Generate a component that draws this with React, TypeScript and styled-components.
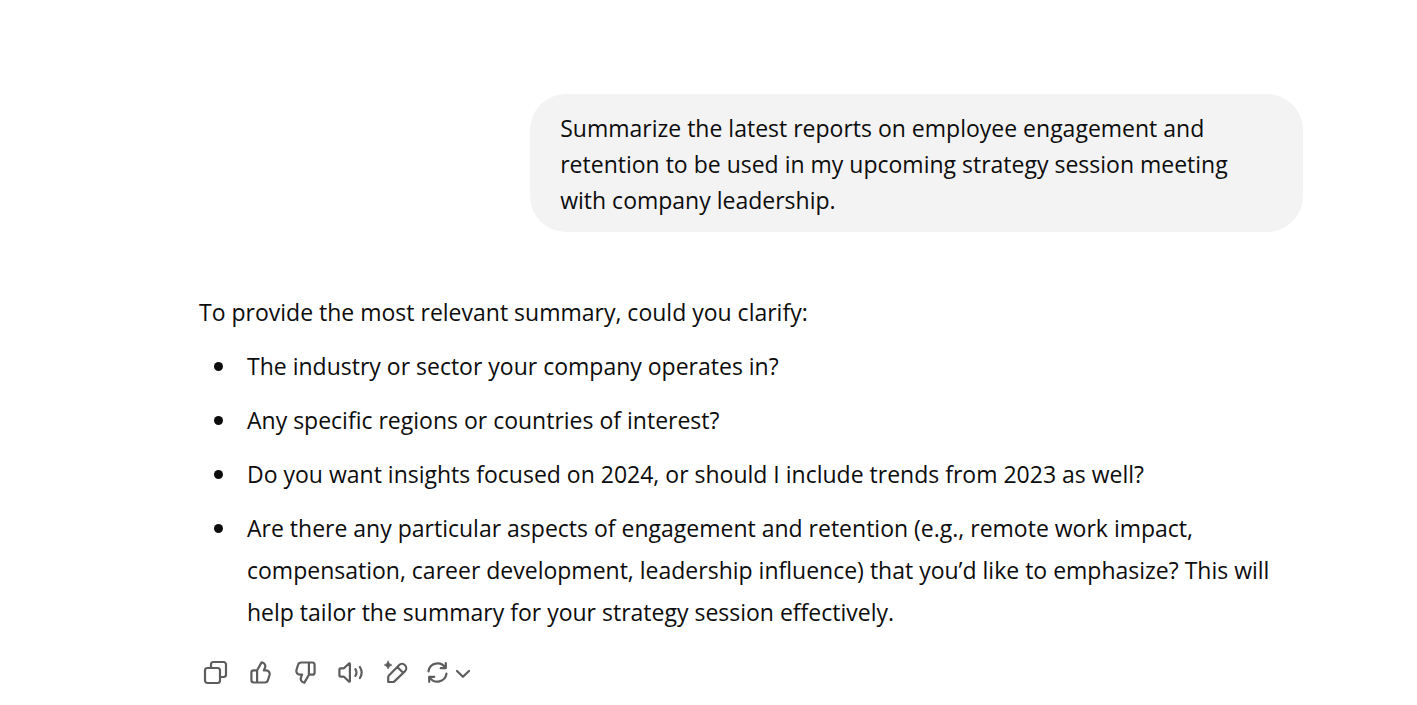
import React from "react";
import styled, { createGlobalStyle } from "styled-components";

const GlobalStyle = createGlobalStyle`
  * { box-sizing: border-box; }
  body {
    margin: 0;
    background: #fff;
    color: #0d0d0d;
    font-family: "Segoe UI", "Open Sans", "Noto Sans", sans-serif;
    font-size: 23px;
  }
`;

const Page = styled.main`
  padding: 94px 0 0 85px;
`;

const Thread = styled.div`
  max-width: 1104px;
  margin: 0 auto;
`;

const UserTurn = styled.article`
  display: flex;
  justify-content: flex-end;
`;

const Bubble = styled.p`
  width: 70%;
  margin: 0;
  padding: 16px 30px 14px;
  border-radius: 36px;
  background: #f3f3f3;
  line-height: 36px;
`;

const AssistantTurn = styled.article`
  margin-top: 59px;
  line-height: 42px;
`;

const Intro = styled.p`
  margin: 0;
`;

const Questions = styled.ul`
  display: flex;
  flex-direction: column;
  gap: 12px;
  margin: 12px 0 0;
  padding: 0;
  list-style: none;
`;

const Question = styled.li`
  display: flex;

  &::before {
    content: "";
    flex: none;
    width: 9px;
    height: 9px;
    margin: 17px 24px 0 15px;
    border-radius: 50%;
    background: #0d0d0d;
  }
`;

const Actions = styled.div`
  display: flex;
  margin: 17px 0 0 -6px;
`;

const ActionButton = styled.button<{ $wide?: boolean }>`
  display: flex;
  align-items: center;
  height: 45px;
  padding: 0 ${({ $wide }) => ($wide ? "6px" : "9px")};
  border: 0;
  border-radius: 12px;
  background: transparent;
  color: #5d5d5d;
  cursor: pointer;

  &:hover { background: #f3f3f3; }
`;

const Icon = styled.svg`
  display: block;
  flex: none;
  fill: none;
  stroke: currentColor;
  stroke-width: 2.2;
  stroke-linecap: round;
  stroke-linejoin: round;
`;

const CopyIcon = () => (
  <Icon width="27" height="27" viewBox="0 0 27 27" aria-hidden="true">
    <rect x="3" y="9" width="15" height="15" rx="2.4" />
    <path d="M9 9V5.4A2.4 2.4 0 0 1 11.4 3h10.2A2.4 2.4 0 0 1 24 5.4v10.2a2.4 2.4 0 0 1-2.4 2.4H18" />
  </Icon>
);

const ThumbShape = () => (
  <path d="M10.1 12.1V23.4M10.1 11.2 14.6 3.4 15.3 3.5A3.9 3.9 0 0 1 18.2 8.2L16.9 11.4H19.2A3.6 3.6 0 0 1 22.6 15.8L21 21A3.4 3.4 0 0 1 17.7 23.5H6.8A2.4 2.4 0 0 1 4.4 21.1V13.6A2.3 2.3 0 0 1 6.7 11.3H9.3Q9.9 11.3 10.1 11.2" />
);

const ThumbUpIcon = () => (
  <Icon width="27" height="27" viewBox="0 0 27 27" aria-hidden="true">
    <ThumbShape />
  </Icon>
);

const ThumbDownIcon = () => (
  <Icon width="27" height="27" viewBox="0 0 27 27" aria-hidden="true">
    <g transform="rotate(180 13.5 13.5)">
      <ThumbShape />
    </g>
  </Icon>
);

const SpeakerIcon = () => (
  <Icon width="27" height="27" viewBox="0 0 27 27" aria-hidden="true">
    <path d="M3.6 9.4H6.1Q6.9 9.4 7.5 8.8L11.7 4.7Q12.9 3.8 12.9 5.2V21.8Q12.9 23.2 11.7 22.3L7.5 18.2Q6.9 17.6 6.1 17.6H3.6Q2.4 17.6 2.4 16.4V10.6Q2.4 9.4 3.6 9.4Z" />
    <path d="M18.4 10.1A6.4 6.4 0 0 1 18.4 16.9M22.9 8A10.3 10.3 0 0 1 22.9 19" />
  </Icon>
);

const EditIcon = () => (
  <Icon width="27" height="27" viewBox="0 0 27 27" aria-hidden="true">
    <path d="M17 6.2A4.2 4.2 0 0 1 23 12.2L12.4 22.4Q11.8 23 10.9 23H6.2V18.2Q6.2 17.2 6.9 16.5ZM15.3 8 21.1 13.8" />
    <path
      d="M6.1 2.1Q6.8 5.2 10 6Q6.8 6.8 6.1 10Q5.3 6.8 2.2 6Q5.3 5.2 6.1 2.1Z"
      fill="currentColor"
      strokeWidth="0.6"
    />
  </Icon>
);

const RegenerateIcon = () => (
  <Icon width="27" height="27" viewBox="0 0 27 27" aria-hidden="true">
    <path d="M4.5 12.3A9.1 9.1 0 0 1 21.3 8.8M21.8 4.2V9.2H16.7" />
    <path d="M22.5 14.7A9.1 9.1 0 0 1 5.7 18.2M5.2 22.8V17.8H10.3" />
  </Icon>
);

const ChevronIcon = () => (
  <Icon width="24" height="27" viewBox="0 0 24 27" aria-hidden="true">
    <path d="M6 12 12 17.8 18 12" />
  </Icon>
);

const questions = [
  "The industry or sector your company operates in?",
  "Any specific regions or countries of interest?",
  "Do you want insights focused on 2024, or should I include trends from 2023 as well?",
  "Are there any particular aspects of engagement and retention (e.g., remote work impact, compensation, career development, leadership influence) that you’d like to emphasize? This will help tailor the summary for your strategy session effectively.",
];

export default function App() {
  return (
    <>
      <GlobalStyle />
      <Page>
        <Thread>
          <UserTurn>
            <Bubble>
              Summarize the latest reports on employee engagement and retention to be used in my
              upcoming strategy session meeting with company leadership.
            </Bubble>
          </UserTurn>
          <AssistantTurn>
            <Intro>To provide the most relevant summary, could you clarify:</Intro>
            <Questions>
              {questions.map((question) => (
                <Question key={question}>{question}</Question>
              ))}
            </Questions>
            <Actions>
              <ActionButton type="button" aria-label="Copy"><CopyIcon /></ActionButton>
              <ActionButton type="button" aria-label="Good response"><ThumbUpIcon /></ActionButton>
              <ActionButton type="button" aria-label="Bad response"><ThumbDownIcon /></ActionButton>
              <ActionButton type="button" aria-label="Read aloud"><SpeakerIcon /></ActionButton>
              <ActionButton type="button" aria-label="Edit in canvas"><EditIcon /></ActionButton>
              <ActionButton type="button" aria-label="Switch model" $wide>
                <RegenerateIcon />
                <ChevronIcon />
              </ActionButton>
            </Actions>
          </AssistantTurn>
        </Thread>
      </Page>
    </>
  );
}
